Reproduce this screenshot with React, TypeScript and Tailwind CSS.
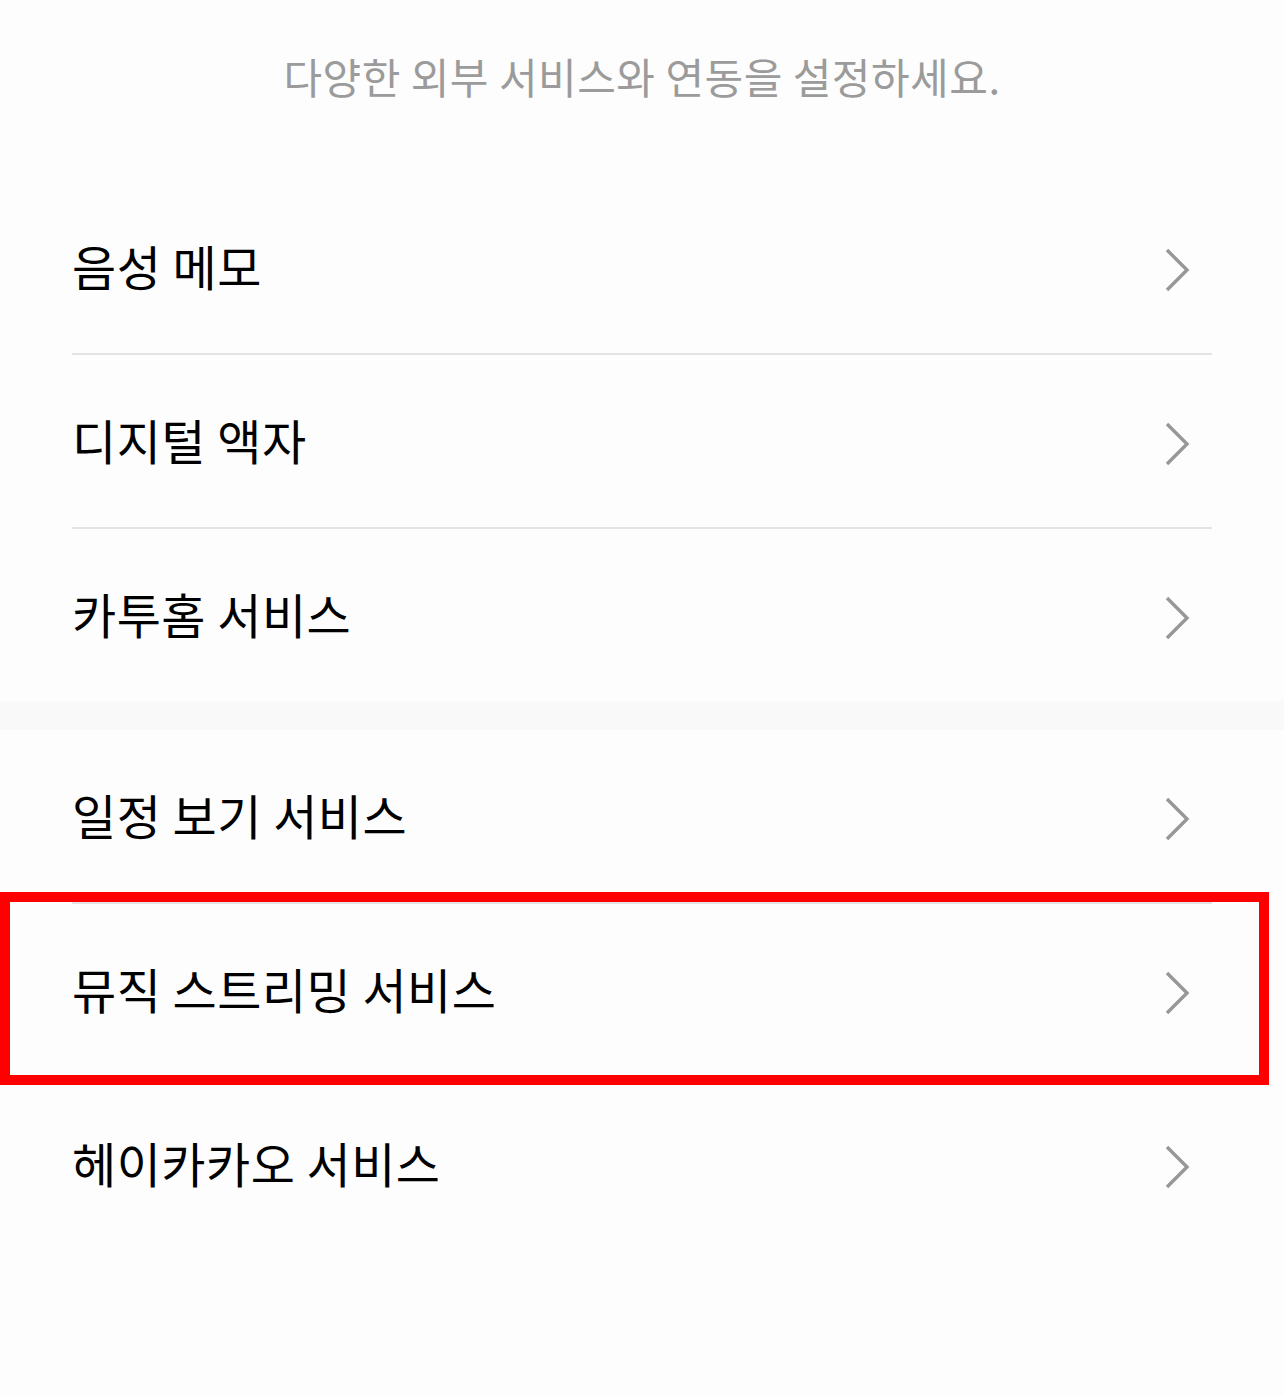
const font = { fontFamily: '"Noto Sans CJK KR", "Noto Sans", sans-serif' };

function Chevron() {
  return (
    <svg width="26" height="44" viewBox="0 0 26 44" fill="none" className="mt-[10px] shrink-0">
      <path d="M3 2 L23 22 L3 42" stroke="#979797" strokeWidth="3.4" />
    </svg>
  );
}

function Row({ label, last, highlight }: { label: string; last?: boolean; highlight?: boolean }) {
  return (
    <div className="relative">
      <div className="flex h-[172px] items-center justify-between pb-[5px] pl-[72px] pr-[94px]">
        <span className="text-[48px] leading-none tracking-[0.5px] text-black">{label}</span>
        <Chevron />
      </div>
      {!last && <div className="mx-[72px] h-[2px] bg-[#e3e3e3]" />}
      {/* 강조 표시 박스 */}
      {highlight && (
        <div
          aria-hidden
          className="pointer-events-none absolute -top-[12px] -bottom-[7px] left-0 w-[1269px] border-[10px] border-[#ff0000]"
        />
      )}
    </div>
  );
}

export default function App() {
  return (
    <div className="min-h-[1395px] w-[1284px] bg-[#fdfdfd]" style={font}>
      <div className="flex h-[181px] items-start justify-center pt-[55px]">
        <p className="text-[42px] leading-none tracking-[0.5px] text-[#9b9b9b]">
          다양한 외부 서비스와 연동을 설정하세요.
        </p>
      </div>

      <div>
        <Row label="음성 메모" />
        <Row label="디지털 액자" />
        <Row label="카투홈 서비스" last />
      </div>

      <div className="h-[29px] bg-[#f9f9f9]" />

      <div>
        <Row label="일정 보기 서비스" />
        <Row label="뮤직 스트리밍 서비스" highlight />
        <Row label="헤이카카오 서비스" last />
      </div>
    </div>
  );
}
